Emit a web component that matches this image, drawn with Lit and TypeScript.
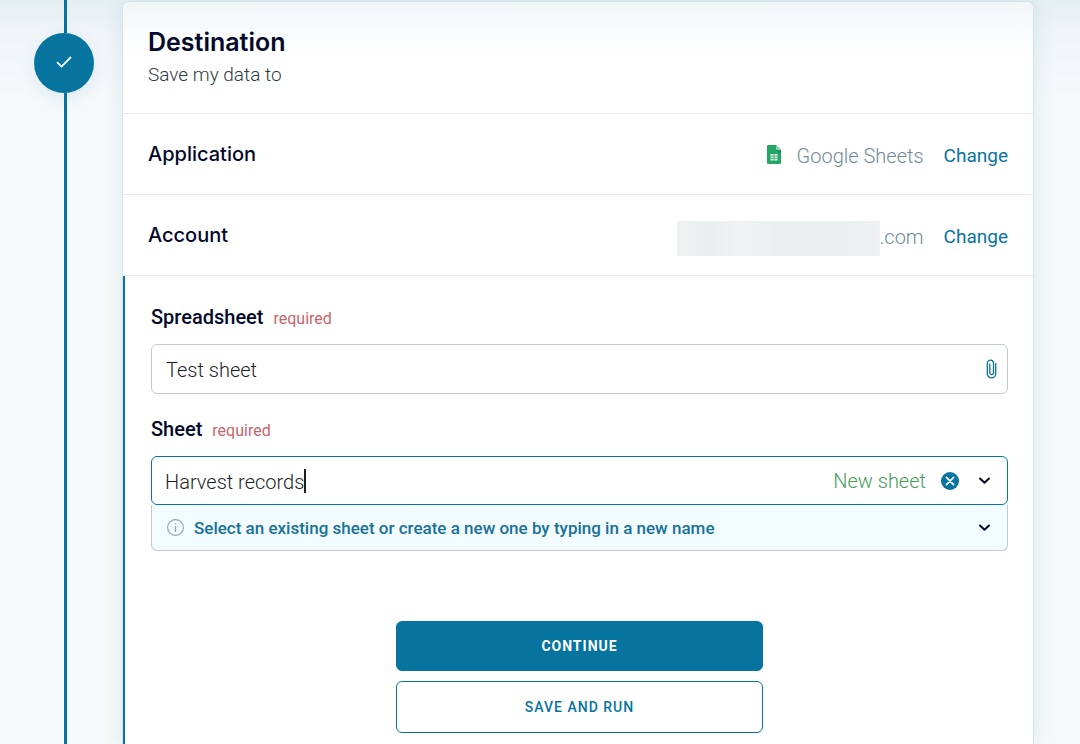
import { LitElement, html, css, svg } from "lit";
import { customElement, property, state } from "lit/decorators.js";

const chevron = svg`<path d="M1 1.5 5.5 5.8 10 1.5" fill="none" stroke="currentColor" stroke-width="2" stroke-linecap="round" stroke-linejoin="round"/>`;

@customElement("step-rail")
class StepRail extends LitElement {
  static styles = css`
    :host { display: flex; flex-direction: column; width: 60px; }
    .line { width: 3px; margin-left: 30px; background: #06749f; }
    .before { height: 33px; }
    .after { flex: 1; }
    .badge {
      display: grid; place-items: center; width: 60px; height: 60px;
      border-radius: 50%; background: #06749f; box-shadow: 0 5px 16px rgba(6, 116, 159, 0.1);
    }
    svg { display: block; }
  `;

  render() {
    return html`
      <div class="line before"></div>
      <div class="badge">
        <svg width="16" height="16" viewBox="0 0 16 16" role="img" aria-label="Completed">
          <path d="M1 7.2 5.6 11.6 15 2" fill="none" stroke="#fff" stroke-width="1.8" />
        </svg>
      </div>
      <div class="line after"></div>
    `;
  }
}

@customElement("summary-row")
class SummaryRow extends LitElement {
  @property() heading = "";

  static styles = css`
    :host {
      display: flex; align-items: center; justify-content: space-between;
      height: 81px; padding: 0 25px; border-bottom: 1px solid #e4eaed;
    }
    h2 { margin: 0; font: 500 20px/26px Inter, "Open Sans", sans-serif; color: #04082a; }
    .value { display: flex; align-items: center; font-weight: 300; color: #728a95; padding-top: 3px; }
    a { margin-left: 20px; font-size: 19px; font-weight: 400; color: #06749f; text-decoration: none; }
  `;

  render() {
    return html`
      <h2>${this.heading}</h2>
      <div class="value">
        <slot></slot>
        <a href="#" aria-label="Change ${this.heading}">Change</a>
      </div>
    `;
  }
}

@customElement("app-root")
class AppRoot extends LitElement {
  @state() sheet = "Harvest records";

  static styles = css`
    :host {
      display: block; color: #04082a;
      font: 400 20px/26px Roboto, "Liberation Sans", sans-serif;
    }
    * { box-sizing: border-box; }
    .page {
      display: flex; gap: 28px; min-height: 100vh; padding: 0 46px 0 34px;
      background: linear-gradient(#e6eff2 0, #f0f5f8 36px, #f5f9fa 100px);
    }
    .card {
      flex: 1; min-width: 0; display: flex; flex-direction: column; margin-top: 1px;
      border: 1px solid #d0e4ea; border-bottom: 0; border-radius: 7px 7px 0 0;
      background: #fff; box-shadow: 0 0 20px rgba(6, 116, 159, 0.12);
    }
    header {
      padding: 25px; height: 112px; border-bottom: 1px solid #e4eaed;
      border-radius: 6px 6px 0 0;
      background: linear-gradient(#f1f6f8, #fff 56px);
    }
    h1 { margin: 0; font: 600 25px/30px Inter, "Open Sans", sans-serif; }
    header p { margin: 5px 0 0; font-size: 19px; font-weight: 300; color: #2f3a42; }
    svg { display: block; flex: none; }
    .sheets { margin: 0 16px 3px 0; }
    .redacted {
      width: 203px; height: 35px; margin-top: 3px;
      background: linear-gradient(90deg, #f0f2f2, #eaeeef 14%, #f0f2f3 30%, #ebeff0 50%, #ebeff0 80%, #eff1f2);
    }
    form { flex: 1; padding: 28px 25px 11px 26px; border-left: 2px solid #06749f; }
    .label { display: flex; align-items: baseline; gap: 10px; font-weight: 500; }
    .required { font-size: 16px; font-weight: 400; color: #c9646a; }
    .field {
      display: flex; align-items: center; width: 100%; height: 50px; margin-top: 12px;
      padding: 0 10px 0 14px; border: 1px solid #bfcbd1; border-radius: 6px; background: #fff;
    }
    .field + .label { margin-top: 22px; }
    input {
      min-width: 0; padding: 2px 0 0; border: 0; outline: 0; background: none;
      font: 300 20px/26px Roboto, "Liberation Sans", sans-serif; color: #1b1f24;
    }
    .field .wide { flex: 1; }
    .field.combo { height: 49px; padding: 0 15px 0 13px; border-color: #06749f; }
    .combo input { field-sizing: content; caret-color: transparent; }
    .caret { width: 2px; height: 24px; background: #1b1f24; }
    .tag { margin-left: auto; font-weight: 300; color: #489a5a; }
    button { font: inherit; cursor: pointer; }
    .icon { display: grid; place-items: center; padding: 0; border: 0; background: none; color: #04082a; }
    .clear { width: 18px; height: 18px; margin: 0 18px 0 15px; }
    .chev { width: 15px; height: 16px; }
    .hint {
      display: flex; align-items: center; width: 100%; height: 46px; padding: 0 15px;
      border: 1px solid #bfcbd1; border-top: 0; border-radius: 0 0 6px 6px;
      background: #f2fbfe; font-size: 17px; font-weight: 500; color: #17719a;
    }
    .hint span { flex: 1; margin-left: 10px; text-align: left; }
    .hint .chev { color: #04082a; }
    .actions { display: grid; gap: 10px; width: 100%; max-width: 367px; margin: 70px auto 0; }
    .action {
      height: 50px; border: 1px solid #06749f; border-radius: 6px;
      font-size: 14px; font-weight: 700; letter-spacing: 1px; color: #fff; background: #06749f;
    }
    .outline { height: 52px; font-weight: 500; color: #06749f; background: #fff; }
  `;

  private onInput(e: Event) {
    this.sheet = (e.target as HTMLInputElement).value;
  }

  private chev() {
    return html`<svg width="11" height="8" viewBox="0 0 11 8" aria-hidden="true">${chevron}</svg>`;
  }

  render() {
    return html`
      <main class="page">
        <step-rail></step-rail>
        <section class="card">
          <header>
            <h1>Destination</h1>
            <p>Save my data to</p>
          </header>
          <summary-row heading="Application">
            <svg class="sheets" width="14" height="19" viewBox="0 0 14 19" aria-hidden="true">
              <path d="M1.3 0H9l5 5v12.7q0 1.3-1.3 1.3H1.3Q0 19 0 17.7V1.3Q0 0 1.3 0Z" fill="#23a566" />
              <path d="m9 5 5 4V5Z" fill="#1c8f56" />
              <path d="M9 0v3.7Q9 5 10.3 5H14Z" fill="#8ed1b1" />
              <path d="M3.5 9h7v6.5h-7Z" fill="#e9f6ef" />
              <path d="M3.5 11.2h7M3.5 13.4h7M7 9v6.5" stroke="#23a566" stroke-width=".8" />
            </svg>
            <span>Google Sheets</span>
          </summary-row>
          <summary-row heading="Account">
            <span class="redacted"></span><span>.com</span>
          </summary-row>
          <form @submit=${(e: Event) => e.preventDefault()}>
            <label class="label" for="spreadsheet">Spreadsheet <span class="required">required</span></label>
            <div class="field">
              <input class="wide" id="spreadsheet" type="text" value="Test sheet" />
              <button class="icon" type="button" aria-label="Choose file">
                <svg width="11" height="20" viewBox="0 0 11 20" aria-hidden="true">
                  <path d="M9.7 4.5v10.2a4.2 4.2 0 0 1-8.4 0V4.3a3 3 0 0 1 6.2 0v9.8a1.9 1.9 0 0 1-3.7 0V5.2" fill="none" stroke="#06749f" stroke-width="1.3" stroke-linecap="round" />
                </svg>
              </button>
            </div>
            <label class="label" for="sheet">Sheet <span class="required">required</span></label>
            <div class="field combo">
              <input id="sheet" type="text" .value=${this.sheet} @input=${this.onInput} />
              <span class="caret"></span>
              <span class="tag">New sheet</span>
              <button class="icon clear" type="button" aria-label="Clear">
                <svg width="18" height="18" viewBox="0 0 18 18" aria-hidden="true">
                  <circle cx="9" cy="9" r="9" fill="#06749f" />
                  <path d="m5.4 5.4 7.2 7.2m0-7.2-7.2 7.2" stroke="#fff" stroke-width="1.7" stroke-linecap="round" />
                </svg>
              </button>
              <button class="icon chev" type="button" aria-label="Show sheets">${this.chev()}</button>
            </div>
            <button class="hint" type="button">
              <svg width="17" height="17" viewBox="0 0 17 17" aria-hidden="true">
                <circle cx="8.5" cy="8.5" r="7.9" fill="none" stroke="#8fa5ae" stroke-width="1.1" />
                <path d="M8.5 7v6M8.5 4.2v1.4" stroke="#8fa5ae" stroke-width="1.3" />
              </svg>
              <span>Select an existing sheet or create a new one by typing in a new name</span>
              <i class="icon chev">${this.chev()}</i>
            </button>
            <div class="actions">
              <button class="action" type="submit">CONTINUE</button>
              <button class="action outline" type="button">SAVE AND RUN</button>
            </div>
          </form>
        </section>
      </main>
    `;
  }
}
